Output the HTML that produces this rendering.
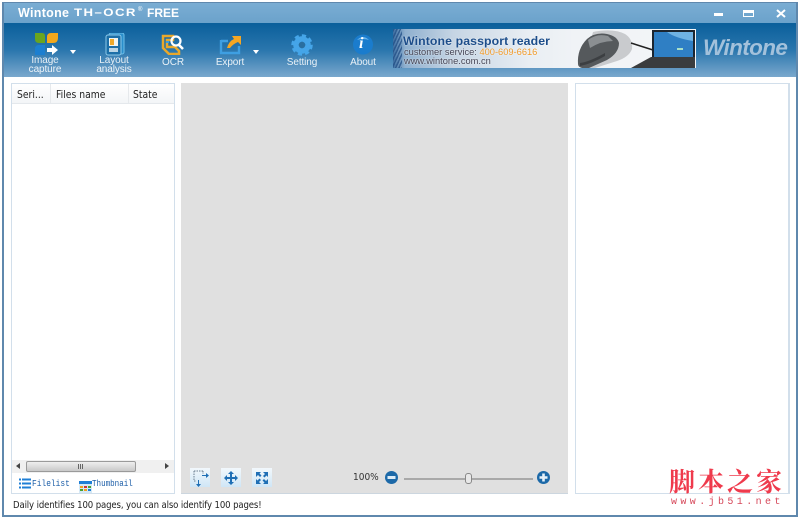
<!DOCTYPE html>
<html><head><meta charset="utf-8"><style>
html,body{margin:0;padding:0;background:#fff}
#r{position:relative;width:800px;height:518px;overflow:hidden;background:#fff;font-family:"Liberation Sans",sans-serif}
#r div,#r span,#r svg{position:absolute}
.t{white-space:nowrap;color:#fff;font-size:10px;line-height:8.5px;text-align:center;opacity:.88;letter-spacing:-.1px}
.c{white-space:nowrap;color:#222;font-family:"DejaVu Sans",sans-serif;font-size:10.5px;transform-origin:0 50%;transform:scaleX(.88)}
.b{filter:blur(.35px)}
</style></head><body><div id="r">
<div style="left:2px;top:2px;width:796px;height:515px;background:#5f88ad"></div>
<div style="left:4px;top:3px;width:792px;height:512px;background:#fff"></div>
<div style="left:4px;top:3px;width:792px;height:20px;background:linear-gradient(#7aadd3,#6ba2cb)"></div>
<div style="left:4px;top:23px;width:792px;height:54px;background:linear-gradient(#0a5f9b 0,#2a76ad 50%,#7aa8cd 100%)"></div>
<span style="left:18px;top:6px;color:#fff;font-size:12.5px;font-weight:bold;letter-spacing:.3px;white-space:nowrap">Wintone</span>
<span style="left:74px;top:7px;color:#fff;font-size:11px;font-weight:bold;letter-spacing:1.2px;white-space:nowrap;transform-origin:0 50%;transform:scaleX(1.2)">TH–OCR</span>
<span style="left:138px;top:7px;color:#fff;font-size:6px">®</span>
<span style="left:147px;top:6px;color:#fff;font-size:12px;font-weight:bold;white-space:nowrap">FREE</span>
<div style="left:714px;top:13px;width:9px;height:3px;background:#fff"></div>
<div style="left:743px;top:10px;width:11px;height:7px;box-sizing:border-box;border:1.5px solid #fff;border-top:3px solid #fff"></div>
<svg style="left:776px;top:9px" width="10" height="9"><path d="M1 1L9 8M9 1L1 8" stroke="#fff" stroke-width="2"/></svg>

<svg class="b" style="left:34px;top:32px" width="25" height="25"><path d="M1 1H8Q11 1 11 4V11H5Q1 11 1 7Z" fill="#6aa51f"/><path d="M13 11V5Q13 1 17 1H24V6Q24 11 19 11Z" fill="#f3a81c"/><path d="M1 23V17Q1 13 5 13H11V23Z" fill="#1c7fd0"/><path d="M13 16H18V13L24 18L18 23V20H13Z" fill="#fff"/></svg>
<svg class="b" style="left:70px;top:50px" width="6" height="4"><path d="M0 0H6L3 4Z" fill="#fff"/></svg>
<div class="t" style="left:24px;top:57px;width:42px">Image<br>capture</div>
<svg class="b" style="left:105px;top:33px" width="20" height="23"><rect x="4" y="0" width="15" height="21" rx="2" fill="#2a8ecb" stroke="#6fc0ea"/><rect x="1" y="2" width="15" height="20" rx="2" fill="#1c6fa8" stroke="#8cc8e8"/><rect x="4" y="5" width="9" height="8" fill="#f0f4f0"/><rect x="5" y="6" width="4" height="6" fill="#eea92a"/><rect x="4" y="15" width="9" height="4" fill="#b9d5e6"/></svg>
<div class="t" style="left:93px;top:57px;width:42px">Layout<br>analysis</div>
<svg class="b" style="left:161px;top:34px" width="24" height="21"><path d="M2 2H12V6H6V13H14L18 17V20H8L2 14Z" fill="none" stroke="#e9a82b" stroke-width="2.5"/><rect x="5" y="7" width="3" height="2" fill="#3da0dd"/><circle cx="15" cy="7" r="4.5" fill="none" stroke="#fff" stroke-width="2.2"/><path d="M18 11L22 15" stroke="#fff" stroke-width="2.6"/></svg>
<div class="t" style="left:152px;top:59px;width:42px">OCR</div>
<svg class="b" style="left:219px;top:33px" width="24" height="22"><path d="M2 8H9M2 7V20H20V13" fill="none" stroke="#3e9fe2" stroke-width="2.4"/><path d="M8 15Q10 8 15 6L13 3H22V12L19 9Q14 11 11 15Z" fill="#f5a623"/></svg>
<svg class="b" style="left:253px;top:50px" width="6" height="4"><path d="M0 0H6L3 4Z" fill="#fff"/></svg>
<div class="t" style="left:209px;top:59px;width:42px">Export</div>
<svg class="b" style="left:291px;top:34px" width="22" height="22" viewBox="0 0 22 22"><circle cx="11" cy="11" r="6" fill="none" stroke="#45a5e8" stroke-width="5.500"/><circle cx="11" cy="11" r="9" fill="none" stroke="#45a5e8" stroke-width="3.500" stroke-dasharray="4 3"/><circle cx="11" cy="11" r="3.200" fill="#2a6f9f"/></svg>
<div class="t" style="left:281px;top:59px;width:42px">Setting</div>
<svg class="b" style="left:353px;top:34px" width="20" height="21"><circle cx="10" cy="10.500" r="10" fill="#1a7ccd"/><path d="M4 6Q10 0 16 6Q10 4 4 6Z" fill="#6bb5ea"/></svg>
<span style="left:359px;top:35px;color:#fff;font:italic bold 16px 'Liberation Serif',serif">i</span>
<div class="t" style="left:342px;top:59px;width:42px">About</div>

<div style="left:393px;top:29px;width:303px;height:39px;background:linear-gradient(90deg,#3d6fa2 0,#8fb0cf 4%,#c6d5e4 20%,#e9eef3 45%,#f0f3f6 60%,#f4f6f8 100%)"></div>
<div style="left:393px;top:29px;width:9px;height:39px;background:repeating-linear-gradient(115deg,#234f86 0 1.5px,transparent 1.5px 3px);opacity:.75"></div>
<span style="left:403px;top:34px;color:#1c4d8a;font-size:12.3px;font-weight:bold;white-space:nowrap;letter-spacing:.1px;text-shadow:0 0 1.5px #fff">Wintone passport reader</span>
<span style="left:404px;top:47px;color:#445;font-size:9.300px;white-space:nowrap;text-shadow:0 0 1.5px #fff">customer service: <span style="position:static;color:#f09a2a">400-609-6616</span></span>
<span style="left:404px;top:56px;color:#445;font-size:9.300px;white-space:nowrap;text-shadow:0 0 1.5px #fff">www.wintone.com.cn</span>
<svg class="b" style="left:575px;top:29px" width="121" height="39">
<path d="M18 3Q38 -1 50 5Q58 10 57 20Q54 28 42 32L20 39H8Z" fill="#c9cbce"/>
<path d="M3 35Q2 20 12 10Q20 3 32 5Q42 7 44 14Q44 24 32 31L14 39H7Q3 38 3 35Z" fill="#55595c"/>
<path d="M13 11Q22 4 33 7L38 12Q26 12 15 19Z" fill="#8b8f92"/>
<path d="M5 34Q14 33 30 24V27Q16 35 5 37Z" fill="#3c3f42"/>
<path d="M56 14L78 21" stroke="#222" stroke-width="1.500"/>
<rect x="77" y="1" width="43" height="29" fill="#1b2530"/>
<rect x="79" y="3" width="39" height="25" fill="#2f7fc4"/>
<path d="M79 3H118V12Q100 9 92 3Z" fill="#6fb3e4"/>
<path d="M102 19H108V21H102Z" fill="#a8e0c8"/>
<path d="M76 28H120V39H56Z" fill="#3a3c3e"/>
</svg>
<span class="b" style="left:703px;top:35px;color:#a3c1db;font-size:22.500px;font-weight:bold;font-style:italic;letter-spacing:-.6px;white-space:nowrap">Wintone</span>

<div style="left:11px;top:83px;width:162px;height:409px;border:1px solid #d2dfeb;background:#fff"></div>
<div style="left:12px;top:84px;width:162px;height:19px;background:linear-gradient(#fff,#f3f5f7);border-bottom:1px solid #e4e8ec"></div>
<div style="left:50px;top:84px;width:1px;height:19px;background:#e6e9ec"></div>
<div style="left:128px;top:84px;width:1px;height:19px;background:#e6e9ec"></div>
<span class="c" style="left:17px;top:89px">Seri...</span>
<span class="c" style="left:56px;top:89px">Files name</span>
<span class="c" style="left:133px;top:89px">State</span>
<div style="left:12px;top:460px;width:162px;height:13px;background:#f0f0f0"></div>
<div style="left:26px;top:461px;width:110px;height:11px;box-sizing:border-box;border:1px solid #9a9a9a;border-radius:2px;background:linear-gradient(#eee,#c9c9c9)"></div>
<div style="left:78px;top:464px;width:1px;height:5px;background:#666"></div>
<div style="left:80px;top:464px;width:1px;height:5px;background:#666"></div>
<div style="left:82px;top:464px;width:1px;height:5px;background:#666"></div>
<svg style="left:16px;top:463px" width="5" height="6"><path d="M4 0V6L0 3Z" fill="#444"/></svg>
<svg style="left:165px;top:463px" width="5" height="6"><path d="M0 0V6L4 3Z" fill="#444"/></svg>
<svg style="left:19px;top:478px" width="12" height="11"><path d="M0 1.500H2M3 1.500H12M0 5.500H2M3 5.500H12M0 9.500H2M3 9.500H12" stroke="#1f7fd6" stroke-width="2"/></svg>
<span style="left:32px;top:478px;font:9.500px 'Liberation Mono',monospace;color:#1c5ea8;white-space:nowrap;transform-origin:0 50%;transform:scaleX(.83)">Filelist</span>
<svg style="left:79px;top:481px" width="13" height="12"><rect width="13" height="12" fill="#d5e9f6"/><rect y="0" width="13" height="3" fill="#1f7fd6"/><rect x="1" y="5" width="3" height="2" fill="#f0a020"/><rect x="5" y="5" width="3" height="2" fill="#c33"/><rect x="9" y="5" width="3" height="2" fill="#49a030"/><rect x="1" y="8" width="3" height="2" fill="#49a030"/><rect x="5" y="8" width="3" height="2" fill="#f0a020"/><rect x="9" y="8" width="3" height="2" fill="#1f7fd6"/></svg>
<span style="left:92px;top:479px;font:9px 'Liberation Mono',monospace;color:#1c5ea8;white-space:nowrap;transform-origin:0 50%;transform:scaleX(.84)">Thumbnail</span>

<div style="left:181px;top:83px;width:387px;height:410px;background:#e0e0e0;border-bottom:1px solid #ccd6df"></div>
<div style="left:190px;top:468px;width:20px;height:19px;background:linear-gradient(#f2f8fc,#cfe6f6)"></div>
<svg style="left:190px;top:468px" width="20" height="20"><path d="M4 3H13M4 3V13M13 3V6M4 13H6" fill="none" stroke="#6b7f90" stroke-dasharray="1.500 1"/><path d="M12 7H16V5L19 7.500L16 10V8H12ZM8 12V16H6L8.500 19L11 16H9V12Z" fill="#1f6fb5"/></svg>
<div style="left:221px;top:468px;width:20px;height:19px;background:linear-gradient(#f2f8fc,#cfe6f6)"></div>
<svg style="left:221px;top:468px" width="20" height="20"><path d="M10 3L13 6H11V9H14V7L17 10L14 13V11H11V14H13L10 17L7 14H9V11H6V13L3 10L6 7V9H9V6H7Z" fill="#1f6fb5"/></svg>
<div style="left:252px;top:468px;width:20px;height:19px;background:linear-gradient(#f2f8fc,#cfe6f6)"></div>
<svg style="left:252px;top:468px" width="20" height="20"><path d="M4 4H9L7.500 5.500L9.500 7.500L8 9L6 7L4 9ZM16 4V9L14.500 7.500L12.500 9.500L11 8L13 6L11 4ZM4 16V11L5.500 12.500L7.500 10.500L9 12L7 14L9 16ZM16 16H11L12.500 14.500L10.500 12.500L12 11L14 13L16 11Z" fill="#1f6fb5"/></svg>
<span style="left:353px;top:472px;font-family:'DejaVu Sans',sans-serif;font-size:10px;color:#333;transform-origin:0 50%;transform:scaleX(.9)">100%</span>
<svg style="left:385px;top:471px" width="13" height="13"><circle cx="6.500" cy="6.500" r="6.500" fill="#1c69a8"/><rect x="2.500" y="5" width="8" height="3" fill="#dcecf7"/></svg>
<div style="left:404px;top:478px;width:129px;height:2px;background:#a9a9a9"></div>
<div style="left:465px;top:473px;width:5px;height:9px;background:#e8e8e8;border:1px solid #888;border-radius:3px"></div>
<svg style="left:537px;top:471px" width="13" height="13"><circle cx="6.500" cy="6.500" r="6.500" fill="#1c69a8"/><path d="M2.500 5.200H5.200V2.500H7.800V5.200H10.500V7.800H7.800V10.500H5.200V7.800H2.500Z" fill="#e6f1f9"/></svg>

<div style="left:575px;top:83px;width:212px;height:409px;border:1px solid #d2dfeb;border-width:1px 2px 1px 1px;background:#fff"></div>
<span style="left:13px;top:500px;font-family:'DejaVu Sans',sans-serif;font-size:9.800px;color:#222;white-space:nowrap;letter-spacing:-.15px;transform-origin:0 50%;transform:scaleX(.873)">Daily identifies 100 pages, you can also identify 100 pages!</span>

<span style="left:669px;top:466px;font-family:'Noto Serif CJK SC','Noto Sans CJK SC',sans-serif;font-size:26px;line-height:30px;color:#ef3a4c;white-space:nowrap;letter-spacing:3px;font-weight:bold">脚本之家</span>
<span style="left:671px;top:497px;font-family:'Liberation Mono',monospace;font-size:10px;color:#d6485a;white-space:nowrap;letter-spacing:3.400px">www.jb51.net</span>
</div></body></html>
